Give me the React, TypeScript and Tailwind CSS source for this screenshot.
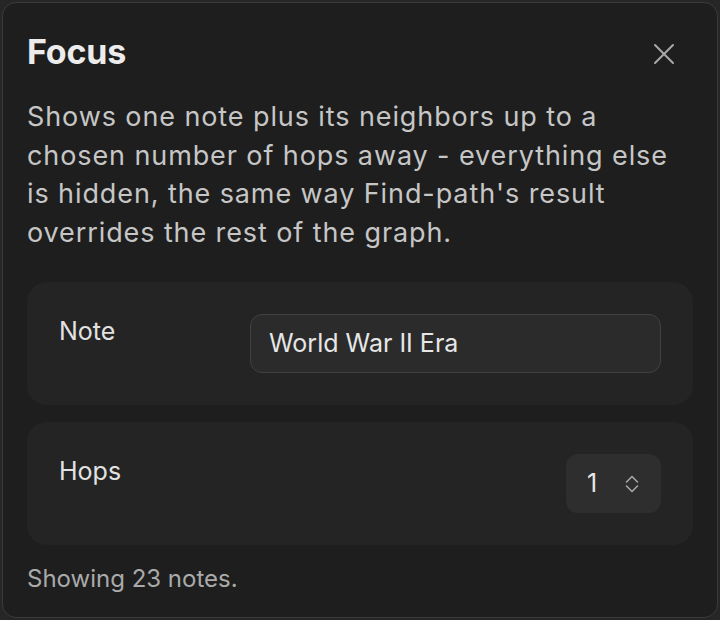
import React from "react";

export default function App() {
  return (
    <div className="min-h-screen bg-[#262626] p-[2px]" style={{ fontFamily: 'Inter, "Noto Sans", sans-serif' }}>
      <div className="h-[616px] rounded-[14px] border border-[#3a3a3a] bg-[#1e1e1e] px-[24px] pt-[29px]">
        <div className="flex items-start justify-between">
          <h1 className="text-[34px] font-bold leading-[40px] tracking-[-0.2px] text-[#ececec]">Focus</h1>
          <button className="mr-[18px] mt-[11px] text-[#a8a8a8]" aria-label="Close">
            <svg width="22" height="22" viewBox="0 0 22 22" fill="none" stroke="currentColor" strokeWidth="2" strokeLinecap="round">
              <path d="M2 2L20 20M20 2L2 20" />
            </svg>
          </button>
        </div>
        <p className="mt-[26px] max-w-[650px] text-[27px] leading-[38.5px] tracking-[0.9px] text-[#c6c6c6]">
          Shows one note plus its neighbors up to a chosen number of hops away - everything else is hidden, the same way Find-path's result overrides the rest of the graph.
        </p>
        <div className="mt-[30px] flex flex-col gap-[17px]">
          <div className="flex items-start justify-between rounded-[20px] bg-[#242424] p-[32px]">
            <span className="text-[25px] leading-[34px] text-[#e2e2e2]">Note</span>
            <div className="flex h-[59px] w-[411px] items-center rounded-[12px] border border-[#414141] bg-[#2b2b2b] px-[18px] text-[25px] text-[#e6e6e6]">
              World War II Era
            </div>
          </div>
          <div className="flex items-start justify-between rounded-[20px] bg-[#242424] p-[32px]">
            <span className="text-[25px] leading-[34px] text-[#e2e2e2]">Hops</span>
            <div className="flex h-[59px] w-[95px] items-center rounded-[12px] bg-[#2e2e2e] pl-[21px] pr-[22px] text-[25px] text-[#e6e6e6]">
              <span className="flex-1">1</span>
              <svg width="14" height="18" viewBox="0 0 14 18" fill="none" stroke="#a8a8a8" strokeWidth="1.6" strokeLinecap="round" strokeLinejoin="round">
                <path d="M1.5 7L7 1.5L12.5 7" />
                <path d="M1.5 11L7 16.5L12.5 11" />
              </svg>
            </div>
          </div>
        </div>
        <p className="mt-[17px] text-[24px] leading-[34px] text-[#aaaaaa]">Showing 23 notes.</p>
      </div>
    </div>
  );
}
